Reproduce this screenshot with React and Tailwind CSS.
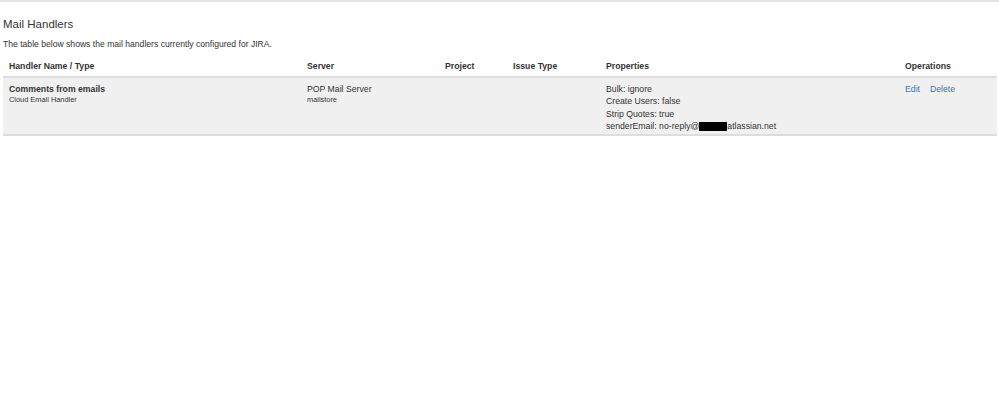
export default function App() {
  const cols = ["w-[298px]", "w-[138px]", "w-[68px]", "w-[93px]", "w-[299px]", "flex-1"];
  const heads = ["Handler Name / Type", "Server", "Project", "Issue Type", "Properties", "Operations"];
  return (
    <div className="w-[999px] h-[397px] bg-white text-[#333] px-[3px]" style={{ fontFamily: '"Liberation Sans", Arial, sans-serif' }}>
      <div className="h-[2px] bg-[#e4e4e4] -mx-[3px]" />
      <div className="pt-[15px] text-[11.5px] leading-[14px]">Mail Handlers</div>
      <div className="pt-[7px] text-[8.6px] leading-[12px]">The table below shows the mail handlers currently configured for JIRA.</div>
      <div className="mt-[7px] w-[994px]">
        <div className="flex h-[21px] items-center border-b-2 border-[#dddddd] text-[8.7px] font-bold">
          {heads.map((h, i) => (
            <div key={h} className={`${cols[i]} pl-[6px]`}>{h}</div>
          ))}
        </div>
        <div className="flex bg-[#f0f0f0] h-[58px] border-b-2 border-[#dddddd] pt-[5px] text-[8.7px] leading-[12.3px]">
          <div className={`${cols[0]} pl-[6px]`}>
            <div className="font-bold">Comments from emails</div>
            <div className="text-[7.4px] leading-[10px]">Cloud Email Handler</div>
          </div>
          <div className={`${cols[1]} pl-[6px]`}>
            <div>POP Mail Server</div>
            <div className="text-[7.4px] leading-[10px]">mailstore</div>
          </div>
          <div className={`${cols[2]} pl-[6px]`} />
          <div className={`${cols[3]} pl-[6px]`} />
          <div className={`${cols[4]} pl-[6px]`}>
            <div>Bulk: ignore</div>
            <div>Create Users: false</div>
            <div>Strip Quotes: true</div>
            <div className="flex items-center">
              senderEmail: no-reply@<span className="inline-block w-[28px] h-[9px] bg-black" />atlassian.net
            </div>
          </div>
          <div className={`${cols[5]} pl-[6px] text-[#3b73af] flex gap-[10px] items-start`}>
            <span>Edit</span>
            <span>Delete</span>
          </div>
        </div>
      </div>
    </div>
  );
}
